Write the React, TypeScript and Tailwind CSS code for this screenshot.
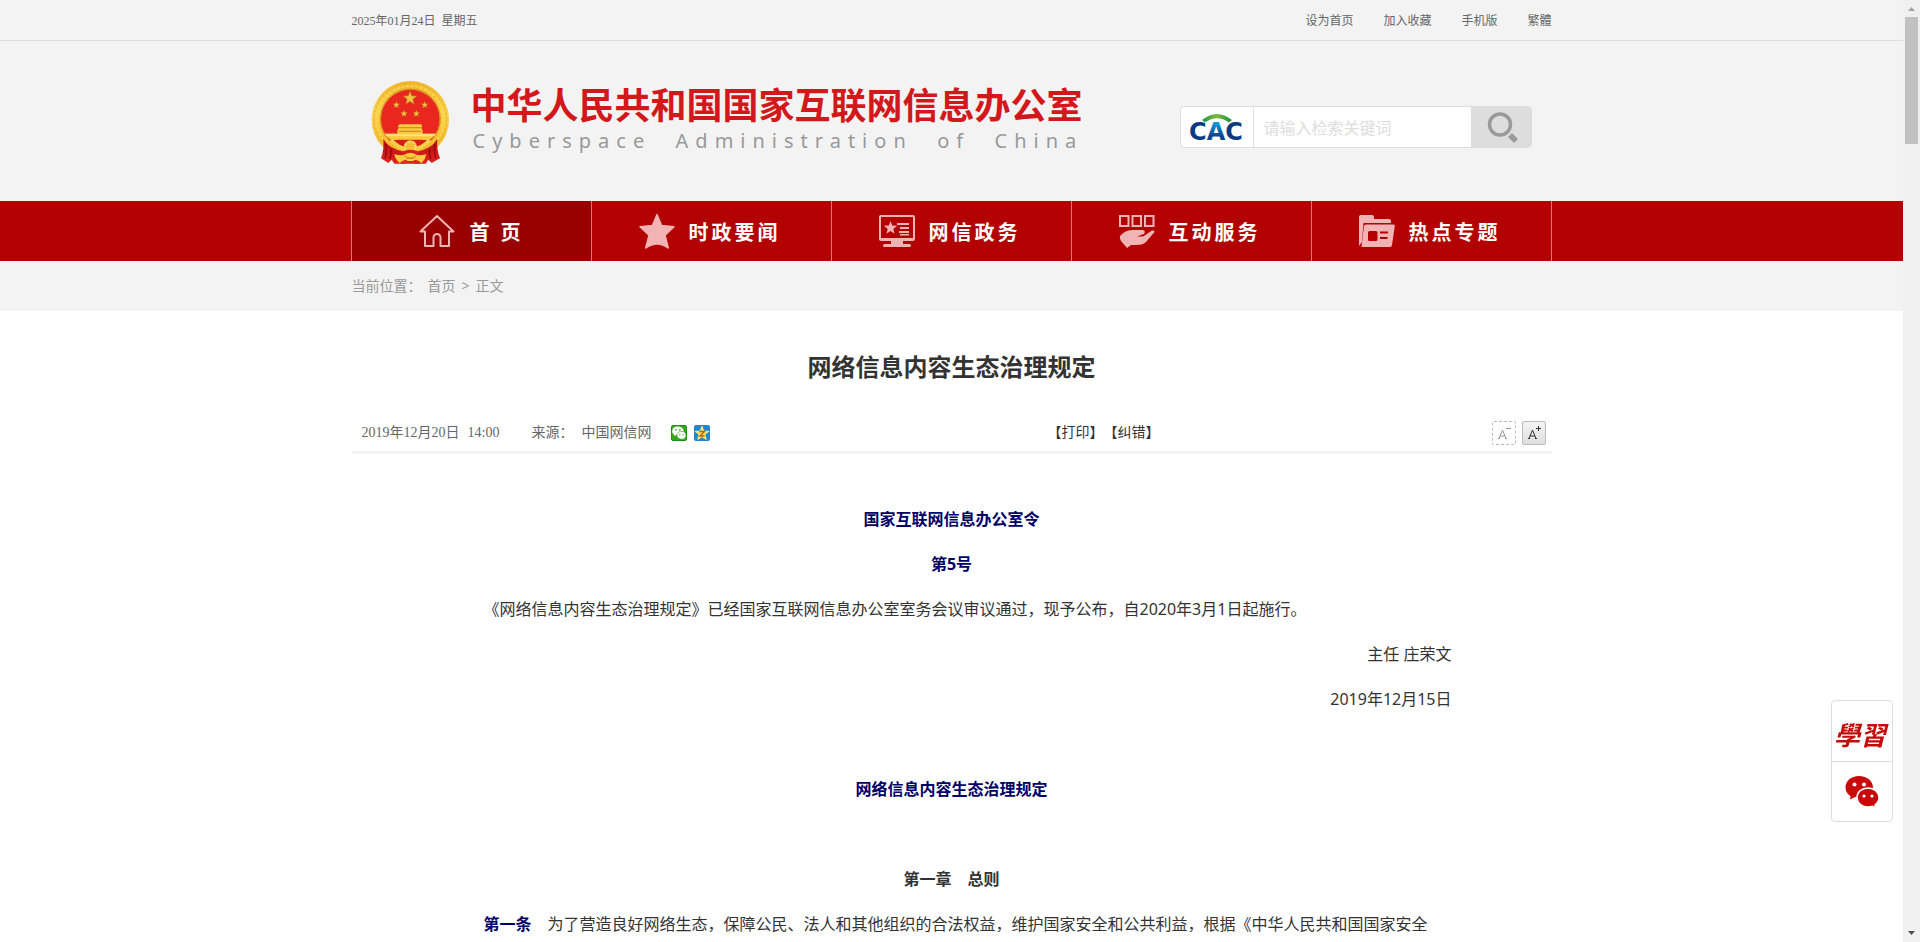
import React from "react";

const sans = "font-['Noto_Sans','Noto_Sans_CJK_SC',sans-serif]";
const song = "font-['Liberation_Serif','Noto_Sans_CJK_SC',serif]";

const starPoints = (cx: number, cy: number, r: number) =>
  Array.from({ length: 10 }, (_, i) => {
    const a = (Math.PI / 5) * i - Math.PI / 2;
    const d = i % 2 ? r * 0.42 : r;
    return `${(cx + d * Math.cos(a)).toFixed(1)},${(cy + d * Math.sin(a)).toFixed(1)}`;
  }).join(" ");

function Emblem() {
  return (
    <svg viewBox="0 0 270 285" className="h-[95px] w-[90px] shrink-0" aria-hidden="true">
      <defs>
        <linearGradient id="gold" x1="0" y1="0" x2="0" y2="1">
          <stop offset="0" stopColor="#f0b52c" />
          <stop offset="0.4" stopColor="#fbd348" />
          <stop offset="1" stopColor="#f3b022" />
        </linearGradient>
        <linearGradient id="drape" x1="0" y1="0" x2="0" y2="1">
          <stop offset="0" stopColor="#b90d12" />
          <stop offset="1" stopColor="#e2231c" />
        </linearGradient>
      </defs>
      <circle cx="136" cy="134" r="116" fill="url(#gold)" />
      <circle cx="136" cy="134" r="109" fill="none" stroke="#eab02e" strokeWidth="3" strokeDasharray="7 6" />
      <circle cx="136" cy="134" r="101" fill="none" stroke="#fcdb60" strokeWidth="4" strokeDasharray="9 5" />
      <circle cx="136" cy="132" r="90" fill="none" stroke="#d08a22" strokeWidth="3" />
      <circle cx="136" cy="132" r="88" fill="#e9271f" />
      <path d="M62 176h148q-14 26-38 18H98q-24 8-36-18z" fill="#fbc93a" />
      <path d="M60 176h152l-4 8H64z" fill="#ffe27a" />
      <path d="M78 195h116l-20 18H98z" fill="#d81d1b" />
      <path d="M97 168l4-12h68l4 12v10H97zM103 148h66l3 8h-74z" fill="#fbcb41" />
      <path d="M99 157h72v3H99zM102 167h66v3h-66z" fill="#cf7d17" />
      <polygon points={starPoints(135, 70, 22)} fill="#f7c243" stroke="#b9631a" strokeWidth="2" />
      <polygon points={starPoints(94, 90, 11)} fill="#f7c243" stroke="#b9631a" />
      <polygon points={starPoints(179, 90, 11)} fill="#f7c243" stroke="#b9631a" />
      <polygon points={starPoints(117, 116, 11)} fill="#f7c243" stroke="#b9631a" />
      <polygon points={starPoints(154, 116, 11)} fill="#f7c243" stroke="#b9631a" />
      <path d="M55 192q18 30 62 38l-8 22 14 14H88l-8-12-10 10-22-14q10-26 7-58z" fill="url(#drape)" />
      <path d="M217 192q-18 30-62 38l-6 22-2 14h35l8-12 10 10 25-14q-11-26-8-58z" fill="url(#drape)" />
      <path d="M62 206q4 26-2 44M78 222q2 18-4 30M210 206q-4 26 2 44M194 222q-2 18 4 30" fill="none" stroke="#8f0a0e" strokeWidth="4" />
      <path d="M78 195q22 24 45 26M194 195q-22 24-45 26" fill="none" stroke="#fbd04a" strokeWidth="11" />
      <circle cx="136" cy="216" r="20" fill="#f6bd33" />
      <circle cx="136" cy="216" r="16" fill="none" stroke="#ffe37a" strokeWidth="5" strokeDasharray="8 5" />
      <path d="M112 230q24-12 48 0v26q-24 14-48 0z" fill="#d81d1b" />
      <path d="M88 238q26 6 32 0 16-10 32 0 6 6 32 0-2 14-14 26-10-8-18-10-16 10-32 0-8 2-16 10-14-12-16-26z" fill="#fbcb41" />
      <path d="M118 243q18 12 36 0M125 250h22" fill="none" stroke="#d48a1a" strokeWidth="3" />
      <path d="M106 266l14-8h32l14 8z" fill="#e2231c" />
    </svg>
  );
}

function CacLogo() {
  return (
    <svg viewBox="0 0 60 36" className="h-9 w-[60px] overflow-visible" role="img" aria-label="CAC">
      <defs>
        <linearGradient id="arc" x1="0" y1="0" x2="1" y2="0">
          <stop offset="0" stopColor="#1c9a4b" />
          <stop offset="0.5" stopColor="#7cb93c" />
          <stop offset="1" stopColor="#149246" />
        </linearGradient>
        <linearGradient id="mid" x1="0" y1="0" x2="0" y2="1">
          <stop offset="0.2" stopColor="#1499d6" />
          <stop offset="0.6" stopColor="#0a4a97" />
          <stop offset="1" stopColor="#0a357c" />
        </linearGradient>
      </defs>
      <path d="M15 11Q30 -1 45 11L42 13.500Q30 5 18 13.500Z" fill="url(#arc)" />
      <text x="29" y="31" textAnchor="middle" fontFamily="DejaVu Sans" fontWeight="700" fontSize="24" fill="#0a3a82">
        C<tspan fill="url(#mid)">A</tspan>C
      </text>
    </svg>
  );
}

const iconClass = "h-9 w-9 shrink-0";
const pink = "#f2b3b5";

const HomeIcon = () => (
  <svg viewBox="0 0 36 36" className={iconClass} fill="none" stroke={pink} strokeWidth="2" strokeLinejoin="round" strokeLinecap="round">
    <path d="M18 3L1.500 18.500H6V33H14.500V24.500a3.500 3.500 0 0 1 7 0V33H30V18.500H34.500Z" />
  </svg>
);
const StarIcon = () => (
  <svg viewBox="0 0 36 36" className={iconClass} fill={pink} stroke={pink} strokeWidth="1.500" strokeLinejoin="round">
    <path d="M18 1.500L22.600 12.500L35 13.800L26 22.300L29.300 35Q18 27 6.700 35L10 22.300L1 13.800L13.400 12.500Z" />
  </svg>
);
const MonitorIcon = () => (
  <svg viewBox="0 0 36 36" className={iconClass} fill={pink}>
    <path fillRule="evenodd" d="M2 2h32a2 2 0 0 1 2 2v22a2 2 0 0 1-2 2H24v3h6.500a1.500 1.500 0 0 1 0 3h-25a1.500 1.500 0 0 1 0-3H12v-3H2a2 2 0 0 1-2-2V4a2 2 0 0 1 2-2zM2 4v21h32V4z" />
    <polygon points={starPoints(11.5, 15, 7)} />
    <path d="M18 10h12v2H18zM21 14h9v2h-9zM20 18h10v2H20zM21 21h9v1.500h-9z" />
  </svg>
);
const HandIcon = () => (
  <svg viewBox="0 0 36 36" className={iconClass}>
    <path fill="none" stroke={pink} strokeWidth="2" d="M1 3h8.500v10H1zM13.500 3h8.500v10h-8.500zM26 3h8.500v10H26z" />
    <path fill={pink} d="M1 23Q6 17 13 17H24Q27 18 25 21L18 23.500H24L33 17.500Q36 17 35.500 19L27 29Q24 32 18 32H12L8 35L2 28Q0 25 1 23Z" />
  </svg>
);
const FolderIcon = () => (
  <svg viewBox="0 0 36 36" className={iconClass} fill={pink}>
    <path d="M2 2H13Q15 2 15 4V6H30Q32 6 32 8V10H4.500L3 29 0 33V4Q0 2 2 2Z" />
    <path fillRule="evenodd" d="M7 11.500H34.500Q36 11.500 35.800 13L33 32Q32.800 34 31 34H2.500L5 13Q5.300 11.500 7 11.500ZM10.500 18Q9 18 9 19.500V26.500Q9 28 10.500 28H17Q18.500 28 18.500 26.500V19.500Q18.500 18 17 18ZM21 18.500V20.500H29V18.500ZM21 24V26H28.500V24Z" />
  </svg>
);

const navItems = [
  { label: "首 页", Icon: HomeIcon, active: true },
  { label: "时政要闻", Icon: StarIcon, active: false },
  { label: "网信政务", Icon: MonitorIcon, active: false },
  { label: "互动服务", Icon: HandIcon, active: false },
  { label: "热点专题", Icon: FolderIcon, active: false },
];

function WechatGlyph({ className, fill, eye }: { className: string; fill: string; eye: string }) {
  return (
    <svg viewBox="0 0 34 34" className={className} aria-hidden="true">
      <path fill={fill} d="M14 1C6 1 .5 6 .5 12.500c0 4 2 6.700 5 8.800L5 24.500l5-2.500q6 1.500 10-.5Q28 18 28 12.500C28 6 22 1 14 1z" />
      <circle cx="9.500" cy="9.500" r="2" fill={eye} />
      <circle cx="19" cy="9.500" r="2" fill={eye} />
      <path fill={fill} stroke={eye} strokeWidth="1.500" d="M23 13c-6 0-11 4-11 9.500S17 32 23 32q3 0 4.500-.7L31 33l-1-3c2.500-2 4-4.500 4-7.500C34 17 29 13 23 13z" />
      <circle cx="19" cy="21" r="1.600" fill={eye} />
      <circle cx="27" cy="21" r="1.600" fill={eye} />
    </svg>
  );
}

function Scrollbar() {
  return (
    <div className="flex w-[17px] shrink-0 flex-col items-center bg-[#f0f0f0]" aria-hidden="true">
      <svg viewBox="0 0 17 17" className="h-[17px] w-[17px]"><path d="M8.500 7L12 11H5Z" fill="#a3a3a3" /></svg>
      <div className="h-[127px] w-[13px] bg-[#c1c1c1]" />
      <svg viewBox="0 0 17 17" className="mt-auto h-[17px] w-[17px]"><path d="M5 6H12L8.500 10Z" fill="#505050" /></svg>
    </div>
  );
}

export default function App() {
  return (
    <div className={`flex h-screen overflow-hidden bg-white text-[#333] ${sans}`}>
      <div className="min-w-0 flex-1">
        <div className="border-b border-[#ddd] bg-[#f3f3f3]">
          <div className={`mx-auto flex h-10 max-w-[1200px] items-center justify-between pt-0.5 text-xs text-[#666] ${song}`}>
            <div className="flex gap-1.5">
              <span>2025年01月24日</span>
              <span>星期五</span>
            </div>
            <div className="flex gap-[30px]">
              <a href="#home">设为首页</a>
              <a href="#fav">加入收藏</a>
              <a href="#mobile">手机版</a>
              <a href="#trad">繁體</a>
            </div>
          </div>
        </div>

        <header className="bg-[#f3f3f3]">
          <div className="mx-auto flex h-40 max-w-[1200px] items-start pl-[13px] pr-5">
            <a href="#top" className="mt-[34px] flex">
              <Emblem />
              <span className="ml-4 mt-2 flex flex-col">
                <span className="text-4xl/[46px] font-bold text-[#d3181c]">中华人民共和国国家互联网信息办公室</span>
                <span className="pl-0.5 text-xl/6 tracking-[7px] whitespace-pre text-[#999]">{"Cyberspace  Administration  of  China"}</span>
              </span>
            </a>
            <form className="ml-auto mt-[65px] flex h-[42px] w-[352px] overflow-hidden rounded border border-[#ddd] bg-white">
              <span className="flex w-[73px] items-center justify-center border-r border-[#ddd]">
                <CacLogo />
              </span>
              <input
                type="text"
                aria-label="检索关键词"
                placeholder="请输入检索关键词"
                className="min-w-0 flex-1 px-2.5 pt-0.5 text-base outline-none placeholder:text-[#ddd]"
              />
              <button type="button" aria-label="检索" className="flex w-[60px] items-center justify-center bg-[#ddd] pl-1">
                <svg viewBox="0 0 32 32" className="h-8 w-8" fill="none" stroke="#999">
                  <circle cx="13" cy="13.500" r="10.500" strokeWidth="3.500" />
                  <path d="M23 24L29 30" strokeWidth="5.500" />
                </svg>
              </button>
            </form>
          </div>
        </header>

        <nav className="bg-[#b30000]">
          <ul className="mx-auto flex h-[60px] max-w-[1201px] border-l border-[#d97777]">
            {navItems.map(({ label, Icon, active }) => (
              <li key={label} className={`w-1/5 border-r border-[#d97777] ${active ? "bg-[#990000]" : ""}`}>
                <a
                  href="#nav"
                  className={`flex h-full items-center justify-center gap-3.5 text-xl font-bold tracking-[3px] text-white ${active ? "" : "pr-1"}`}
                >
                  <Icon />
                  <span className="pt-1">{label}</span>
                </a>
              </li>
            ))}
          </ul>
        </nav>

        <div className="bg-[#f3f3f3]">
          <div className="mx-auto flex h-[50px] max-w-[1200px] items-center gap-1.5 text-sm text-[#999]">
            <span>当前位置：</span>
            <a href="#home">首页</a>
            <span>&gt;</span>
            <a href="#text">正文</a>
          </div>
        </div>

        <main className="mx-auto max-w-[1200px]">
          <h1 className="pt-[38px] text-center text-2xl/9 font-bold">网络信息内容生态治理规定</h1>
          <div className={`mt-[27px] flex h-[42px] items-center border-b-[3px] border-[#f3f3f3] pl-2.5 pr-1.5 pt-0.5 text-sm text-[#666] ${song}`}>
            <span className="flex gap-2">
              <span>2019年12月20日</span>
              <span>14:00</span>
            </span>
            <span className="ml-8 flex gap-2">
              <span>来源：</span>
              <span>中国网信网</span>
            </span>
            <button type="button" aria-label="微信" className="ml-5 flex h-4 w-4 items-center justify-center rounded-xs border border-[#1d8f12] bg-[#35a81d]">
              <WechatGlyph className="h-3.5 w-3.5" fill="#fff" eye="#35a81d" />
            </button>
            <button type="button" aria-label="QQ空间" className="ml-[7px] h-4 w-4 overflow-hidden rounded-xs bg-[#1f86cf]">
              <svg viewBox="0 0 16 16" className="h-4 w-4">
                <polygon points={starPoints(8, 8.5, 7)} fill="#fbd64b" stroke="#fbe37a" strokeWidth="1.200" strokeLinejoin="round" />
                <path d="M5.500 6.500H10.500L6 11H10.500" fill="none" stroke="#b4610f" strokeWidth="1.300" />
              </svg>
            </button>
            <span className="ml-auto flex text-[#333]">
              <button type="button">【打印】</button>
              <button type="button">【纠错】</button>
            </span>
            <button type="button" aria-label="缩小字号" className="ml-[332px] h-6 w-6 rounded-xs border border-dashed border-[#bbb] text-[#999]">
              <svg viewBox="0 0 22 22" className="h-full w-full" fill="none" stroke="currentColor">
                <path d="M6 16.500L9.500 8L13 16.500M7 14H12M5 16.500H7M12 16.500H14M13 6.500H18" />
              </svg>
            </button>
            <button type="button" aria-label="放大字号" className="ml-1.5 h-6 w-6 rounded-xs border border-[#bbb] bg-linear-to-b from-[#f4f4f4] to-[#dedede] text-[#333]">
              <svg viewBox="0 0 22 22" className="h-full w-full" fill="none" stroke="currentColor">
                <path d="M6 16.500L9.500 8L13 16.500M7 14H12M5 16.500H7M12 16.500H14M13 6.500H18M15.500 4V9" />
              </svg>
            </button>
          </div>

          <article className="mx-auto mt-[43px] max-w-[1000px] text-base/[45px]">
            <p className="text-center font-bold text-[#000066]">国家互联网信息办公室令</p>
            <p className="text-center font-bold text-[#000066]">第5号</p>
            <p className="indent-8">《网络信息内容生态治理规定》已经国家互联网信息办公室室务会议审议通过，现予公布，自2020年3月1日起施行。</p>
            <p className="text-right">主任 庄荣文</p>
            <p className="text-right">2019年12月15日</p>
            <p className="mt-[45px] text-center font-bold text-[#000066]">网络信息内容生态治理规定</p>
            <p className="mt-[45px] text-center font-bold">第一章　总则</p>
            <p className="indent-8">
              <strong className="text-[#000066]">第一条</strong>　为了营造良好网络生态，保障公民、法人和其他组织的合法权益，维护国家安全和公共利益，根据《中华人民共和国国家安全
            </p>
          </article>
        </main>
      </div>

      <Scrollbar />

      <aside className="fixed right-[27px] bottom-[120px] w-[62px] overflow-hidden rounded border border-[#ddd] bg-white text-[#c40a0a]">
        <a href="#study" className="flex h-[61px] items-center justify-center border-b border-[#ddd] pt-2 pr-1 text-[26px] font-bold italic">學習</a>
        <a href="#wechat" aria-label="微信" className="flex h-[59px] items-center justify-center">
          <WechatGlyph className="h-[34px] w-[34px]" fill="#c80a0a" eye="#fff" />
        </a>
      </aside>
    </div>
  );
}
